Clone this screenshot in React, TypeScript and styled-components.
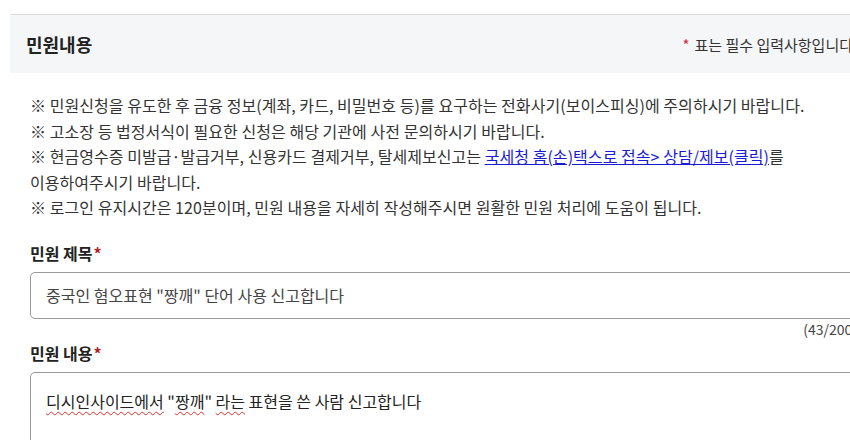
import React from "react";
import styled, { createGlobalStyle } from "styled-components";

const Global = createGlobalStyle`
  html, body { margin: 0; padding: 0; background: #fff; overflow: hidden; }
  body { font-family: "Noto Sans CJK KR", "Noto Sans", sans-serif; color: #333; }
`;

const Page = styled.div`
  width: 867px;
  margin-left: 10px;
  padding-top: 14px;
`;

const Header = styled.div`
  display: flex;
  align-items: center;
  justify-content: space-between;
  height: 58px;
  border-top: 1px solid #dcdcdc;
  background: #f5f6f8;
  padding: 0 24px 0 16px;
`;

const Title = styled.h2`
  margin: 0;
  font-size: 18px;
  font-weight: 700;
  color: #222;
`;

const Required = styled.span`
  font-size: 15px;
  color: #333;
  white-space: nowrap;
`;

const Star = styled.span`
  color: #c8303a;
  margin-right: 5px;
`;

const Body = styled.div`
  padding: 20px 20px 0 20px;
`;

const Notice = styled.p`
  margin: 0;
  font-size: 16px;
  line-height: 25.6px;
  color: #333;
  letter-spacing: 0.05px;
`;

const Link = styled.a`
  color: #1a1ad6;
  text-decoration: underline;
`;

const Field = styled.div`
  display: flex;
  flex-direction: column;
`;

const Label = styled.label<{ $top: number }>`
  margin-top: ${(p) => p.$top}px;
  margin-bottom: 9px;
  font-size: 16px;
  font-weight: 700;
  color: #222;
  line-height: 20px;
`;

const LabelStar = styled.span`
  color: #b3242d;
  margin-left: 1px;
`;

const InputBox = styled.div`
  height: 45px;
  border: 1px solid #9a9a9a;
  border-radius: 5px;
  display: flex;
  align-items: center;
  padding: 0 15px;
  font-size: 16px;
  color: #444;
`;

const Counter = styled.div`
  text-align: right;
  font-size: 14px;
  color: #444;
  line-height: 16px;
  margin-top: 2px;
`;

const TextBox = styled.div`
  height: 120px;
  border: 1px solid #9a9a9a;
  border-radius: 5px;
  padding: 17px 15px;
  font-size: 16px;
  color: #222;
  line-height: 22px;
`;

const Spell = styled.span`
  text-decoration: underline wavy #e0302a;
  text-decoration-thickness: 1px;
  text-underline-offset: 3px;
`;

export default function App() {
  return (
    <>
      <Global />
      <Page>
        <Header>
          <Title>민원내용</Title>
          <Required>
            <Star>*</Star>표는 필수 입력사항입니다
          </Required>
        </Header>
        <Body>
          <Notice>
            ※ 민원신청을 유도한 후 금융 정보(계좌, 카드, 비밀번호 등)를 요구하는 전화사기(보이스피싱)에 주의하시기 바랍니다.
          </Notice>
          <Notice>※ 고소장 등 법정서식이 필요한 신청은 해당 기관에 사전 문의하시기 바랍니다.</Notice>
          <Notice>
            ※ 현금영수증 미발급·발급거부, 신용카드 결제거부, 탈세제보신고는{" "}
            <Link href="#">국세청 홈(손)택스로 접속&gt; 상담/제보(클릭)</Link>를
            <br />
            이용하여주시기 바랍니다.
          </Notice>
          <Notice>
            ※ 로그인 유지시간은 120분이며, 민원 내용을 자세히 작성해주시면 원활한 민원 처리에 도움이 됩니다.
          </Notice>
          <Field>
            <Label $top={22}>
              민원 제목<LabelStar>*</LabelStar>
            </Label>
            <InputBox>중국인 혐오표현 "짱깨" 단어 사용 신고합니다</InputBox>
            <Counter>(43/200)</Counter>
          </Field>
          <Field>
            <Label $top={6}>
              민원 내용<LabelStar>*</LabelStar>
            </Label>
            <TextBox>
              <Spell>디시인사이드에서</Spell> "<Spell>짱깨</Spell>" <Spell>라는</Spell> 표현을 쓴 사람 신고합니다
            </TextBox>
          </Field>
        </Body>
      </Page>
    </>
  );
}
